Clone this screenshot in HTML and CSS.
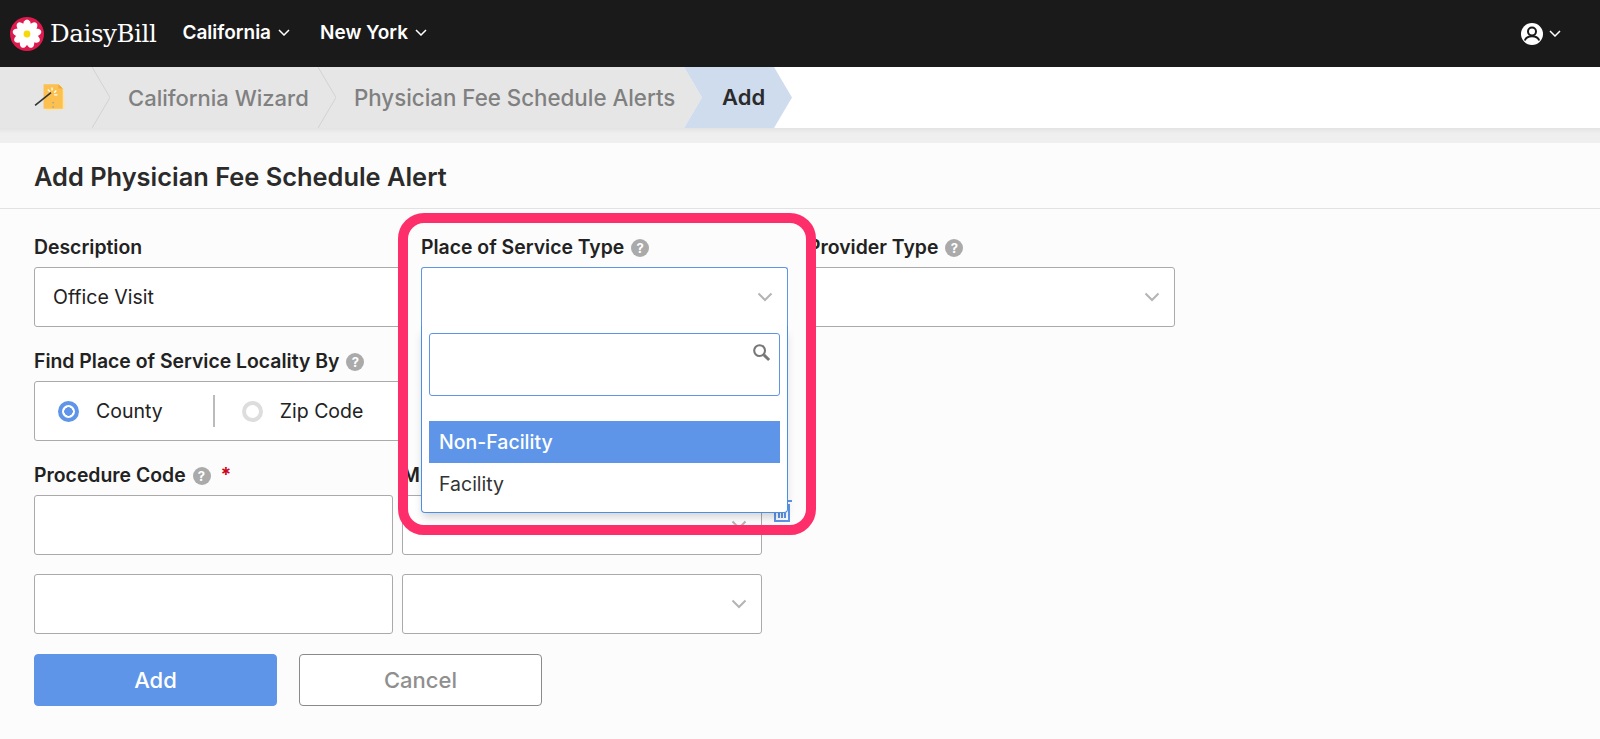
FILE: index.html
```html
<!DOCTYPE html>
<html lang="en">
<head>
<meta charset="utf-8">
<title>Add Physician Fee Schedule Alert</title>
<link rel="stylesheet" href="styles.css">
</head>
<body>
<header class="topbar">
  <svg class="logo" viewBox="0 0 34 34" width="34" height="34">
    <circle cx="17" cy="17" r="17" fill="#df1a4e"/>
    <g fill="#fff">
      <ellipse cx="17" cy="8.5" rx="4" ry="6"/>
      <ellipse cx="17" cy="8.5" rx="4" ry="6" transform="rotate(40 17 17)"/>
      <ellipse cx="17" cy="8.5" rx="4" ry="6" transform="rotate(80 17 17)"/>
      <ellipse cx="17" cy="8.5" rx="4" ry="6" transform="rotate(120 17 17)"/>
      <ellipse cx="17" cy="8.5" rx="4" ry="6" transform="rotate(160 17 17)"/>
      <ellipse cx="17" cy="8.5" rx="4" ry="6" transform="rotate(200 17 17)"/>
      <ellipse cx="17" cy="8.5" rx="4" ry="6" transform="rotate(240 17 17)"/>
      <ellipse cx="17" cy="8.5" rx="4" ry="6" transform="rotate(280 17 17)"/>
      <ellipse cx="17" cy="8.5" rx="4" ry="6" transform="rotate(320 17 17)"/>
    </g>
    <circle cx="17" cy="17" r="3.4" fill="#f5d90a"/>
  </svg>
  <span class="brand">DaisyBill</span>
  <nav class="topnav">
    <a class="topnav-item">California <svg class="caret" viewBox="0 0 12 7" width="12" height="7"><path d="M1 1l5 5 5-5"/></svg></a>
    <a class="topnav-item">New York <svg class="caret" viewBox="0 0 12 7" width="12" height="7"><path d="M1 1l5 5 5-5"/></svg></a>
  </nav>
  <div class="account">
    <svg viewBox="0 0 22 22" width="22" height="22">
      <circle cx="11" cy="11" r="11" fill="#fff"/>
      <circle cx="11" cy="8.5" r="4" fill="none" stroke="#1a1a1a" stroke-width="2"/>
      <path d="M3.8 17.5c1-3 3.6-4.3 7.2-4.3s6.200 1.300 7.200 4.300" fill="none" stroke="#1a1a1a" stroke-width="2"/>
    </svg>
    <svg class="caret" viewBox="0 0 12 7" width="12" height="7"><path d="M1 1l5 5 5-5"/></svg>
  </div>
</header>

<div class="crumbs">
  <div class="trail">
    <div class="crumb-icon">
      <svg viewBox="0 0 32 32" width="34" height="34">
        <path d="M10 5l14-1 4 4 1 18-17 2z" fill="#fde3a0"/>
        <path d="M9 3h14l4 4v19H9z" fill="#fbc04f"/>
        <path d="M23 3l4 4h-4z" fill="#f3a93a"/>
        <path d="M1 23L16 11" stroke="#333" stroke-width="1.500"/>
        <path d="M17 6v3M21 9l-2 2M22 13h-3M13 8l2 2" stroke="#fff" stroke-width="1.200"/>
        <path d="M18 20v1M18 24v1" stroke="#6d8fc9" stroke-width="1.200"/>
      </svg>
    </div>
    <svg class="sep" viewBox="0 0 18 61" width="18" height="61"><path d="M0 0l18 30.500L0 61"/></svg>
    <span class="crumb crumb-first">California Wizard</span>
    <svg class="sep" viewBox="0 0 18 61" width="18" height="61"><path d="M0 0l18 30.500L0 61"/></svg>
    <span class="crumb crumb-second">Physician Fee Schedule Alerts</span>
  </div>
  <div class="crumb-active">Add</div>
</div>
<div class="band"></div>

<main class="panel">
  <h1 class="panel-title">Add Physician Fee Schedule Alert</h1>
  <form class="form">
    <div class="row row-top">
      <div class="field wide">
        <label class="label">Description</label>
        <div class="input">Office Visit</div>
      </div>
      <div class="field wide service">
        <label class="label">Place of Service Type
          <span class="help">?</span></label>
        <div class="input select-open">
          <svg class="chev" viewBox="0 0 16 10" width="16" height="10"><path d="M1.500 1.500L8 8l6.500-6.500"/></svg>
        </div>
        <div class="menu">
          <div class="search">
            <svg viewBox="0 0 20 20" width="19" height="19" class="search-icon">
              <circle cx="8" cy="8" r="5.700" fill="none" stroke="#777" stroke-width="2.200"/>
              <path d="M12.500 12.500L18 18" stroke="#777" stroke-width="3"/>
            </svg>
          </div>
          <div class="option selected">Non-Facility</div>
          <div class="option">Facility</div>
        </div>
        <div class="ring"></div>
      </div>
      <div class="field wide">
        <label class="label">Provider Type <span class="help">?</span></label>
        <div class="input">
          <svg class="chev" viewBox="0 0 16 10" width="16" height="10"><path d="M1.500 1.500L8 8l6.500-6.500"/></svg>
        </div>
      </div>
    </div>

    <div class="field locality">
      <label class="label">Find Place of Service Locality By <span class="help">?</span></label>
      <div class="input radios">
        <span class="radio on"></span><span class="radio-text">County</span>
        <span class="divider"></span>
        <span class="radio"></span><span class="radio-text">Zip Code</span>
      </div>
    </div>

    <div class="codes">
      <div class="field narrow">
        <label class="label">Procedure Code <span class="help">?</span> <span class="req">*</span></label>
        <div class="input"></div>
      </div>
      <div class="field narrow">
        <label class="label">M</label>
        <div class="input">
          <svg class="chev" viewBox="0 0 16 10" width="16" height="10"><path d="M1.500 1.500L8 8l6.500-6.500"/></svg>
        </div>
      </div>
      <svg class="trash" viewBox="0 0 20 24" width="20" height="24">
        <path d="M0 2h20M3 5v17h14V5M7 10v9M10 10v9M13 10v9" fill="none" stroke="#5e95e8" stroke-width="2"/>
      </svg>
    </div>
    <div class="codes second">
      <div class="input narrow"></div>
      <div class="input narrow">
        <svg class="chev" viewBox="0 0 16 10" width="16" height="10"><path d="M1.500 1.500L8 8l6.500-6.500"/></svg>
      </div>
    </div>

    <div class="actions">
      <button type="button" class="btn primary">Add</button>
      <button type="button" class="btn ghost">Cancel</button>
    </div>
  </form>
</main>
</body>
</html>
```
FILE: styles.css
```css
* { box-sizing: border-box; }
html, body { margin: 0; height: 100%; overflow: hidden; }
body {
  background: #fcfcfc;
  font-family: Inter, "Open Sans", sans-serif;
  color: #222;
}

.topbar {
  height: 67px;
  background: #1a1a1a;
  color: #fff;
  display: flex;
  align-items: center;
  padding: 0 39px 0 10px;
}
.logo { flex: none; }
.brand {
  font-family: "DejaVu Serif", serif;
  font-size: 24.500px;
  margin-left: 6px;
  letter-spacing: -0.4px;
}
.topnav { display: flex; margin-left: 26px; gap: 30px; padding-bottom: 2px; }
.topnav-item {
  font-size: 19px;
  font-weight: 600;
  display: flex;
  align-items: center;
  gap: 7px;
}
.caret { fill: none; stroke: #fff; stroke-width: 1.500; }
.account { margin-left: auto; display: flex; align-items: center; gap: 6px; }

.crumbs { height: 61px; display: flex; background: #fff; }
.trail {
  width: 702px;
  background: #e6e6e6;
  display: flex;
  align-items: center;
  clip-path: polygon(0 0, 684px 0, 100% 50%, 684px 100%, 0 100%);
  color: #808080;
  font-size: 22px;
  font-weight: 500;
}
.crumb-icon { width: 92px; padding-left: 34px; display: flex; }
.sep { flex: none; fill: none; stroke: #d2d2d2; stroke-width: 1; }
.crumb { white-space: nowrap; }
.crumb-first { margin-left: 18px; width: 190px; }
.crumb-second { margin-left: 18px; font-size: 22.300px; }
.crumb-active {
  width: 108px;
  margin-left: -18px;
  padding-left: 38px;
  background: #cfdcee;
  clip-path: polygon(0 0, 90px 0, 100% 50%, 90px 100%, 0 100%, 18px 50%);
  font-size: 22px;
  font-weight: 600;
  line-height: 61px;
  color: #2b2b2b;
}
.band {
  height: 15px;
  background: linear-gradient(#e3e3e3, #efefef 35%, #efefef);
}

.panel-title {
  margin: 0;
  height: 66px;
  padding: 2px 0 0 34px;
  display: flex;
  align-items: center;
  font-size: 25.400px;
  font-weight: 600;
  color: #2b2b2b;
  border-bottom: 1px solid #e2e2e2;
}
.form { padding: 27px 0 0 34px; }
.row { display: flex; gap: 20px; }
.field { position: relative; }
.wide { width: 367px; }
.label {
  display: block;
  height: 22px;
  line-height: 22px;
  margin-bottom: 9px;
  font-size: 19.400px;
  font-weight: 600;
  color: #222;
  white-space: nowrap;
}
.help {
  display: inline-block;
  width: 18px;
  height: 18px;
  line-height: 18px;
  margin-left: 2px;
  border-radius: 50%;
  background: #aaa;
  color: #fff;
  font-size: 13px;
  font-weight: 700;
  text-align: center;
  vertical-align: 1px;
}
.req { color: #d0021b; margin-left: 5px; font-weight: 700; }
.input {
  position: relative;
  height: 60px;
  background: #fff;
  border: 1px solid #aaa;
  border-radius: 3px;
  padding-left: 18px;
  display: flex;
  align-items: center;
  font-size: 19.500px;
  color: #222;
}
.chev {
  position: absolute;
  right: 14px;
  top: 24px;
  fill: none;
  stroke: #b4b4b4;
  stroke-width: 2;
}
.select-open {
  border-color: #5e95e8;
  border-bottom: 0;
  border-radius: 3px 3px 0 0;
}
.menu {
  position: absolute;
  left: 0;
  right: 0;
  top: 90px;
  height: 187px;
  background: #fff;
  border: 1px solid #4a8fe6;
  border-top: 0;
  border-radius: 0 0 4px 4px;
  box-shadow: 0 6px 10px -2px rgba(0, 0, 0, 0.18);
  padding: 7px 7px 0;
  z-index: 2;
  font-size: 19.500px;
}
.search {
  position: relative;
  height: 63px;
  margin-bottom: 25px;
  border: 1px solid #5e95e8;
  border-radius: 3px;
}
.search-icon { position: absolute; right: 8px; top: 9px; }
.option {
  height: 42px;
  line-height: 42px;
  padding-left: 10px;
  color: #333;
}
.selected { background: #5e95e8; color: #fff; font-weight: 500; }
.ring {
  position: absolute;
  left: -23px;
  right: -28px;
  top: -23px;
  height: 322px;
  border: 10px solid #fe2e6b;
  border-radius: 26px;
  z-index: 3;
  pointer-events: none;
}

.locality { margin-top: 23px; width: 367px; }
.radios { padding-left: 23px; }
.radio {
  flex: none;
  width: 21px;
  height: 21px;
  border-radius: 50%;
  border: 4px solid #ddd;
  background: #fff;
}
.radio.on {
  border-color: #5e95e8;
  background: radial-gradient(circle, #5e95e8 0 4px, #fff 4.500px);
}
.radio-text { margin-left: 17px; }
.divider {
  flex: none;
  width: 2px;
  height: 32px;
  background: #bbb;
  margin: 0 27px 0 50px;
}

.codes { display: flex; gap: 9px; margin-top: 23px; position: relative; }
.second { margin-top: 19px; }
.narrow { width: 359px; }
.narrow + .narrow { width: 360px; }
.trash { margin: 35px 0 0 1px; }
.actions { display: flex; gap: 22px; margin-top: 20px; }
.btn {
  width: 243px;
  height: 52px;
  border-radius: 4px;
  font-family: inherit;
  font-size: 22px;
  font-weight: 500;
}
.primary { background: #5e95e8; border: 1px solid #5e95e8; color: #fff; }
.ghost { background: #fff; border: 1.500px solid #8a8a8a; color: #8f8f8f; }
```
